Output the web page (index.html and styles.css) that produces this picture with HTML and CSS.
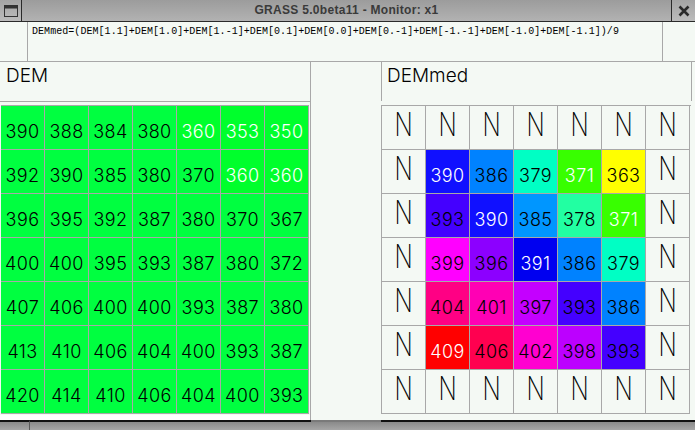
FILE: index.html
```html
<!DOCTYPE html>
<html>
<head>
<meta charset="utf-8">
<link rel="stylesheet" href="styles.css">
</head>
<body>
<div class="window">
  <div class="titlebar">
    <div class="tb-btn tb-left">
      <svg width="14" height="12" viewBox="0 0 14 12"><rect x="0.5" y="0.5" width="13" height="11" fill="none" stroke="#333" stroke-width="1"/><rect x="0.5" y="0.5" width="13" height="3" fill="#333"/></svg>
    </div>
    <div class="title">GRASS 5.0beta11 - Monitor: x1</div>
    <div class="tb-btn tb-right">
      <svg width="12" height="12" viewBox="0 0 12 12"><path d="M1.5 1.5 L10.5 10.5 M10.5 1.5 L1.5 10.5" stroke="#2a2a2a" stroke-width="2.6"/></svg>
    </div>
  </div>
  <div class="expr">
    <div class="expr-gutter"></div>
    <div class="expr-text">DEMmed=(DEM[1.1]+DEM[1.0]+DEM[1.-1]+DEM[0.1]+DEM[0.0]+DEM[0.-1]+DEM[-1.-1]+DEM[-1.0]+DEM[-1.1])/9</div>
    <div class="expr-end"></div>
  </div>
  <div class="main">
    <section class="panel panel-left">
      <div class="label label-left">DEM</div>
      <div class="grid">
        <div class="cell g">390</div><div class="cell g">388</div><div class="cell g">384</div><div class="cell g">380</div><div class="cell g2 w">360</div><div class="cell g2 w">353</div><div class="cell g2 w">350</div>
        <div class="cell g">392</div><div class="cell g">390</div><div class="cell g">385</div><div class="cell g">380</div><div class="cell g">370</div><div class="cell g2 w">360</div><div class="cell g2 w">360</div>
        <div class="cell g">396</div><div class="cell g">395</div><div class="cell g">392</div><div class="cell g">387</div><div class="cell g">380</div><div class="cell g">370</div><div class="cell g">367</div>
        <div class="cell g">400</div><div class="cell g">400</div><div class="cell g">395</div><div class="cell g">393</div><div class="cell g">387</div><div class="cell g">380</div><div class="cell g">372</div>
        <div class="cell g">407</div><div class="cell g">406</div><div class="cell g">400</div><div class="cell g">400</div><div class="cell g">393</div><div class="cell g">387</div><div class="cell g">380</div>
        <div class="cell g">413</div><div class="cell g">410</div><div class="cell g">406</div><div class="cell g">404</div><div class="cell g">400</div><div class="cell g">393</div><div class="cell g">387</div>
        <div class="cell g">420</div><div class="cell g">414</div><div class="cell g">410</div><div class="cell g">406</div><div class="cell g">404</div><div class="cell g">400</div><div class="cell g">393</div>
      </div>
    </section>
    <div class="middle"></div>
    <section class="panel panel-right">
      <div class="label label-right">DEMmed</div>
      <div class="grid grid-right">
        <div class="cell n"><span>N</span></div><div class="cell n"><span>N</span></div><div class="cell n"><span>N</span></div><div class="cell n"><span>N</span></div><div class="cell n"><span>N</span></div><div class="cell n"><span>N</span></div><div class="cell n"><span>N</span></div>
        <div class="cell n"><span>N</span></div><div class="cell v390 w">390</div><div class="cell v386">386</div><div class="cell v379">379</div><div class="cell v371 w">371</div><div class="cell v363">363</div><div class="cell n"><span>N</span></div>
        <div class="cell n"><span>N</span></div><div class="cell v393">393</div><div class="cell v390 w">390</div><div class="cell v385">385</div><div class="cell v378">378</div><div class="cell v371 w">371</div><div class="cell n"><span>N</span></div>
        <div class="cell n"><span>N</span></div><div class="cell v399">399</div><div class="cell v396">396</div><div class="cell v391 w">391</div><div class="cell v386">386</div><div class="cell v379">379</div><div class="cell n"><span>N</span></div>
        <div class="cell n"><span>N</span></div><div class="cell v404">404</div><div class="cell v401">401</div><div class="cell v397">397</div><div class="cell v393">393</div><div class="cell v386">386</div><div class="cell n"><span>N</span></div>
        <div class="cell n"><span>N</span></div><div class="cell v409 w">409</div><div class="cell v406">406</div><div class="cell v402">402</div><div class="cell v398">398</div><div class="cell v393">393</div><div class="cell n"><span>N</span></div>
        <div class="cell n"><span>N</span></div><div class="cell n"><span>N</span></div><div class="cell n"><span>N</span></div><div class="cell n"><span>N</span></div><div class="cell n"><span>N</span></div><div class="cell n"><span>N</span></div><div class="cell n"><span>N</span></div>
      </div>
    </section>
  </div>
  <div class="footer">
    <div class="ft ft-a"></div>
    <div class="ft ft-b"></div>
    <div class="ft ft-c"></div>
    <div class="ft ft-d"></div>
  </div>
</div>
</body>
</html>
```
FILE: styles.css
```css
html, body {
  margin: 0;
  padding: 0;
  background: #f4f9f4;
}
.window {
  width: 695px;
  height: 430px;
  overflow: hidden;
  background: #f4f9f4;
  font-family: Inter, "DejaVu Sans", sans-serif;
}
.titlebar {
  display: flex;
  height: 21px;
  border-bottom: 1px solid #2a2a2a;
  background: linear-gradient(#9c9c9c, #b2b2b2);
}
.tb-btn {
  display: flex;
  align-items: center;
  justify-content: center;
  background: linear-gradient(#a4a4a4, #bcbcbc);
}
.tb-left {
  width: 21px;
  border-right: 1px solid #2a2a2a;
}
.tb-right {
  width: 23px;
  border-left: 1px solid #2a2a2a;
}
.title {
  flex: 1;
  text-align: center;
  font-family: "Liberation Sans", Arial, sans-serif;
  font-weight: bold;
  font-size: 12px;
  line-height: 21px;
  color: #3a3a3a;
  letter-spacing: 0.3px;
}
.expr {
  display: flex;
  height: 39px;
  border-bottom: 1px solid #a8a8a8;
}
.expr-gutter {
  width: 27px;
  border-right: 1px solid #a8a8a8;
}
.expr-text {
  width: 635px;
  border-right: 1px solid #a8a8a8;
  font-family: "Liberation Mono", monospace;
  font-size: 10px;
  line-height: 12px;
  padding: 4px 0 0 4px;
  box-sizing: border-box;
  color: #000;
  white-space: nowrap;
  letter-spacing: 0.05px;
}
.expr-end {
  flex: 1;
}
.main {
  display: flex;
  height: 358px;
}
.panel-left {
  width: 311px;
  border-right: 1px solid #a8a8a8;
  box-sizing: border-box;
  display: flex;
  flex-direction: column;
}
.label {
  height: 39px;
  font-size: 19px;
  font-weight: 300;
  line-height: 19px;
  padding: 4px 0 0 6px;
  box-sizing: border-box;
  color: #000;
}
.label-left {
  height: 40px;
  border-bottom: 1px solid #a8a8a8;
}
.panel-left .grid {
  margin: 3px 0 0 1px;
}
.grid {
  display: grid;
  grid-template-columns: repeat(7, 44px);
  grid-auto-rows: 44px;
  border-top: 1px solid #a8a8a8;
  width: 308px;
}
.panel-left::after {
  content: "";
  display: block;
  height: 5px;
  background: #ffffff;
  margin-top: 1px;
}
.middle {
  width: 70px;
}
.panel-right {
  width: 311px;
  display: flex;
  flex-direction: column;
}
.label-right {
  border-left: 1px solid #a8a8a8;
  border-right: 1px solid #a8a8a8;
  padding-left: 5px;
}
.grid-right {
  margin-top: 4px;
  border-left: 1px solid #a8a8a8;
  width: 309px;
}
.cell {
  box-sizing: border-box;
  border-right: 1px solid #a8a8a8;
  border-bottom: 1px solid #a8a8a8;
  display: flex;
  align-items: center;
  justify-content: center;
  font-size: 18px;
  font-weight: 300;
  letter-spacing: 0.4px;
  padding-top: 7px;
  color: #000;
}
.cell.w { color: #ffffff; }
.g { background: #00ff40; }
.g2 { background: #00ff2c; }
.n {
  background: #f4f9f4;
  padding-top: 0;
  padding-bottom: 6px;
}
.n span {
  display: inline-block;
  font-size: 33px;
  font-weight: 200;
  transform: scaleX(0.72);
  line-height: 1;
  color: #000;
}
.v390 { background: #1010ff; }
.v386 { background: #0082ff; }
.v379 { background: #00ffc4; }
.v371 { background: #38ff00; }
.v363 { background: #ffff00; }
.v393 { background: #4400ff; }
.v385 { background: #0096ff; }
.v378 { background: #22ffa2; }
.v399 { background: #ff00ff; }
.v396 { background: #8c00ff; }
.v391 { background: #0000f0; }
.v404 { background: #ff0084; }
.v401 { background: #ff00b4; }
.v397 { background: #c400ff; }
.v409 { background: #ff0000; }
.v406 { background: #ff0050; }
.v402 { background: #ff00d0; }
.v398 { background: #bc00ff; }
.footer {
  display: flex;
  height: 10px;
}
.ft {
  height: 8px;
  border-top: 2px solid #111;
  background: linear-gradient(#8a8a8a, #a6a6a6);
}
.ft-a {
  width: 29px;
  border-right: 1px solid #5a5a5a;
}
.ft-b {
  width: 281px;
}
.ft-c {
  width: 70px;
  border-top-color: #7a7a7a;
}
.ft-d {
  flex: 1;
}
```
